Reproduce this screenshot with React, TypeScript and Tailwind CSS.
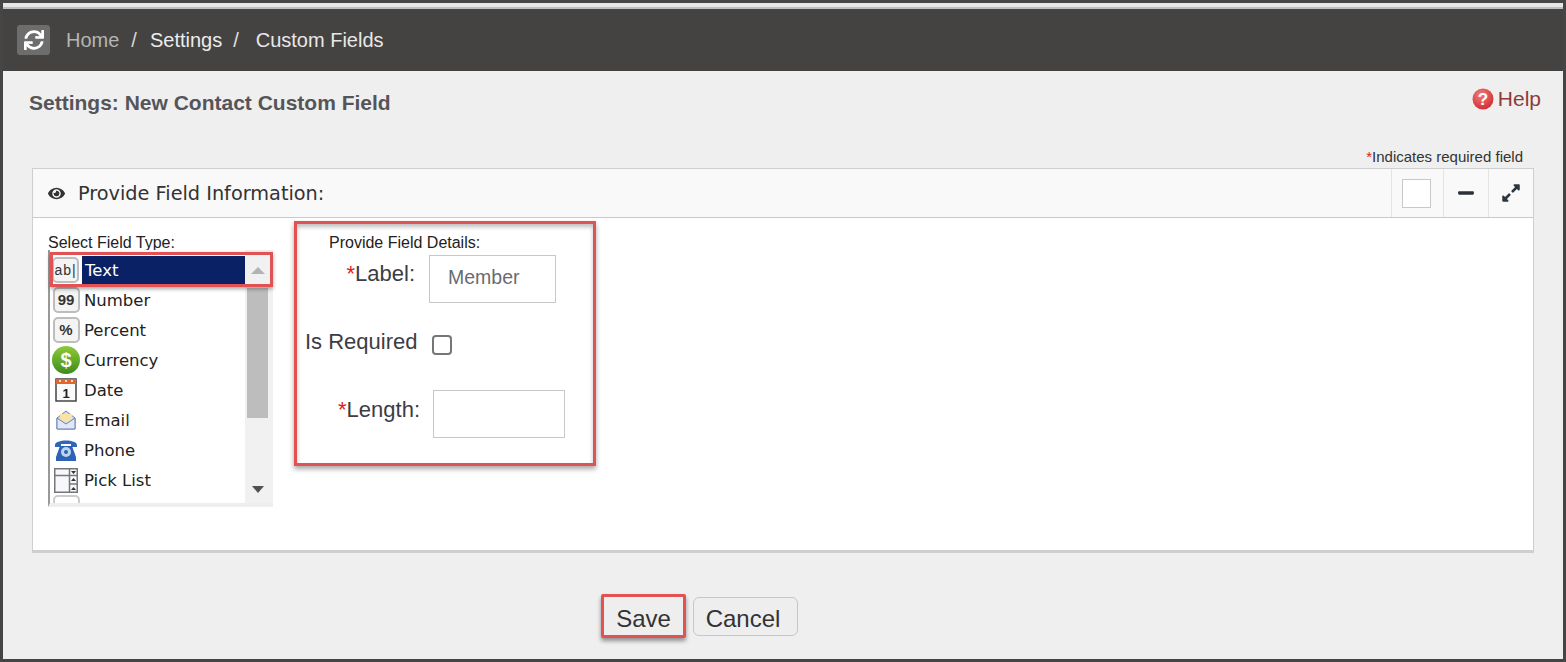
import { FaSync, FaEye, FaExpandAlt, FaMinus } from "react-icons/fa";

const sans = "font-['Liberation_Sans',Arial,sans-serif]";

function KeyIcon({ children, bold }: { children: string; bold?: boolean }) {
  return (
    <span
      className={`flex h-[26px] w-[27px] items-center justify-center rounded-[5px] border-2 border-[#bdbdbd] bg-[#f4f4f4] text-[#333] ${sans} ${
        bold ? "text-[15px] font-bold" : "text-[14px] tracking-[1px]"
      }`}
    >
      {children}
    </span>
  );
}

function Currency() {
  return (
    <svg width="28" height="28" viewBox="0 0 28 28">
      <defs>
        <linearGradient id="cur" x1="0" y1="0" x2="0" y2="1">
          <stop offset="0" stopColor="#8fc93a" />
          <stop offset="1" stopColor="#3c8c1c" />
        </linearGradient>
      </defs>
      <circle cx="14" cy="14" r="14" fill="url(#cur)" />
      <text x="14" y="21" textAnchor="middle" fontSize="20" fontWeight="700" fill="#fff" fontFamily="Liberation Sans">
        $
      </text>
    </svg>
  );
}

function DateIcon() {
  return (
    <svg width="22" height="24" viewBox="0 0 22 24">
      <rect x="1" y="1" width="20" height="22" fill="#fafafa" stroke="#444" strokeWidth="1.5" />
      <rect x="1" y="1" width="20" height="5" fill="#e0662c" />
      <path d="M4 3 H6 M10 3 H12 M16 3 H18" stroke="#fff" strokeWidth="1.5" />
      <text x="11" y="20" textAnchor="middle" fontSize="13" fontWeight="700" fill="#222" fontFamily="Liberation Sans">
        1
      </text>
    </svg>
  );
}

function EmailIcon() {
  return (
    <svg width="20" height="20" viewBox="0 0 20 20">
      <path d="M1 8 L10 1 L19 8 V19 H1 Z" fill="#cfdcf2" stroke="#6d83ad" />
      <rect x="4" y="4" width="12" height="8" fill="#f7e3a5" />
      <path d="M1 8 L10 14 L19 8 V19 H1 Z" fill="#dfe8f8" stroke="#6d83ad" />
    </svg>
  );
}

function PhoneIcon() {
  return (
    <svg width="24" height="24" viewBox="0 0 24 24">
      <path d="M1 7 C1 1 23 1 23 7 V9 H17 V6 H7 V9 H1 Z" fill="#2f66b8" />
      <path d="M6 8 H18 L22 19 V23 H2 V19 Z" fill="#2d62b5" />
      <circle cx="12" cy="14" r="5" fill="#bcd3f2" />
      <circle cx="12" cy="14" r="2" fill="#2d62b5" />
    </svg>
  );
}

function PickListIcon() {
  return (
    <svg width="24" height="25" viewBox="0 0 24 25">
      <rect x="0.75" y="0.75" width="22.5" height="23.5" fill="#f6f8fb" stroke="#777" strokeWidth="1.5" />
      <path d="M0.75 7.5 H23.25 M15.5 0.75 V24.25 M15.5 16 H23.25" stroke="#777" strokeWidth="1.5" fill="none" />
      <path d="M17 3 H22 L19.5 6 Z M17 13 L19.5 10 L22 13 Z M17 22 L19.5 19 L22 22 Z" fill="#333" />
    </svg>
  );
}

const rows = [
  { label: "Number", icon: <KeyIcon bold>99</KeyIcon> },
  { label: "Percent", icon: <KeyIcon bold>%</KeyIcon> },
  { label: "Currency", icon: <Currency /> },
  { label: "Date", icon: <DateIcon /> },
  { label: "Email", icon: <EmailIcon /> },
  { label: "Phone", icon: <PhoneIcon /> },
  { label: "Pick List", icon: <PickListIcon /> },
];

function FieldList() {
  return (
    <div className="relative -mt-px flex h-[257px] w-[225px] border-b-4 border-l-2 border-b-[#eee] border-l-[#999] bg-white font-['DejaVu_Sans',sans-serif] text-[16.5px] text-[#222]">
      <div className="h-full w-[195px] overflow-hidden pt-[5px]">
        <div className="flex h-[30px] items-center">
          <span className="flex h-[30px] w-[31px] shrink-0 items-center justify-center">
            <KeyIcon>ab|</KeyIcon>
          </span>
          <span className="ml-px flex h-[28px] flex-1 items-center bg-[#0a2265] pl-[3px] pt-[2px] text-white">Text</span>
        </div>
        {rows.map((r) => (
          <div key={r.label} className="flex h-[30px] items-center">
            <span className="flex h-[30px] w-[32px] shrink-0 items-center justify-center">{r.icon}</span>
            <span className="pl-[2px] pt-[3px]">{r.label}</span>
          </div>
        ))}
        <div className="ml-[3px] h-[26px] w-[27px] rounded-[5px] border-2 border-[#ccc]" />
      </div>
      {/* scrollbar */}
      <div className="flex h-full w-[28px] flex-col bg-[#f1f1f1] pl-[2px] pr-[5px]">
        <div className="flex h-[38px] shrink-0 items-center justify-center pt-[2px]">
          <span className="h-0 w-0 border-x-[7px] border-b-[7px] border-x-transparent border-b-[#b3b3b3]" />
        </div>
        <div className="h-[130px] shrink-0 bg-[#bdbdbd]" />
        <div className="flex flex-1 items-end justify-center pb-[10px]">
          <span className="h-0 w-0 border-x-[6px] border-t-[7px] border-x-transparent border-t-[#505050]" />
        </div>
      </div>
    </div>
  );
}

function FieldDetails() {
  return (
    <div className={`flex h-[245px] w-[302px] flex-col border-[3px] border-[#e25252] shadow-[0_3px_5px_rgba(0,0,0,0.35),inset_0_3px_4px_rgba(0,0,0,0.25)] ${sans}`}>
      <p className="ml-[32px] mt-[11px] text-[16px] leading-4 text-[#222]">Provide Field Details:</p>
      <div className="mt-[4px] flex">
        <label className="mt-[7px] w-[118px] text-right text-[22px] leading-6 text-[#3c3c44]">
          <span className="text-[#e01c1c]">*</span>Label:
        </label>
        <div className="ml-[14px] flex h-[48px] w-[127px] items-center border border-[#c8c8c8] pb-[2px] pl-[18px] text-[19.5px] text-[#666c72]">
          Member
        </div>
      </div>
      <div className="mt-[27px] flex">
        <label className="ml-[8px] w-[112px] whitespace-nowrap text-[22px] leading-6 text-[#3c3c44]">Is Required</label>
        <span className="ml-[15px] mt-[5px] h-5 w-5 rounded-[4px] border-2 border-[#767676] bg-white" />
      </div>
      <div className="mt-[35px] flex">
        <label className="mt-[8px] w-[123px] text-right text-[22px] leading-6 text-[#3c3c44]">
          <span className="text-[#e01c1c]">*</span>Length:
        </label>
        <div className="ml-[13px] h-[48px] w-[132px] border border-[#c8c8c8]" />
      </div>
    </div>
  );
}

function HelpIcon() {
  return (
    <svg width="22" height="22" viewBox="0 0 22 22">
      <defs>
        <radialGradient id="hlp" cx="0.4" cy="0.3" r="0.8">
          <stop offset="0" stopColor="#f47a7a" />
          <stop offset="1" stopColor="#c9282c" />
        </radialGradient>
      </defs>
      <circle cx="11" cy="11" r="10.5" fill="url(#hlp)" />
      <text x="11" y="17" textAnchor="middle" fontSize="17" fontWeight="700" fill="#fff" fontFamily="Liberation Sans">
        ?
      </text>
    </svg>
  );
}

export default function App() {
  return (
    <div className={`flex h-[662px] w-[1566px] flex-col overflow-hidden border-x-[3px] border-y-[3px] border-[#454545] bg-[#efefef] ${sans}`}>
      <div className="h-[6px] shrink-0 border-b-2 border-b-[#bdbdbd] bg-[#e6e6e6]" />

      {/* Breadcrumb bar */}
      <div className="flex h-[62px] shrink-0 items-center bg-[#454341] pl-[14px] text-[20px]">
        <span className="flex h-[30px] w-[33px] items-center justify-center rounded-[3px] bg-[#6d6d6d] text-white">
          <FaSync size={20} />
        </span>
        <span className="ml-4 text-[#b5b5b2]">Home</span>
        <span className="ml-3 text-[#d8d8d8]">/</span>
        <span className="ml-[13px] text-[#ececec]">Settings</span>
        <span className="ml-[11px] text-[#e0e0e0]">/</span>
        <span className="ml-[17px] text-[#e8e8e8]">Custom Fields</span>
      </div>

      {/* Page title */}
      <div className="flex h-[60px] shrink-0 items-start justify-between pl-[26px] pr-[22px] pt-[20px]">
        <h1 className="text-[21px] font-bold leading-6 text-[#555559]">Settings: New Contact Custom Field</h1>
        <a className="-mt-[4px] flex items-center gap-1 text-[21px] leading-6 text-[#8f3b37]">
          <HelpIcon />
          Help
        </a>
      </div>

      <p className="h-[24px] shrink-0 pr-[40px] pt-[18px] text-right text-[15px] leading-4 text-[#333]">
        <span className="text-[#e01c1c]">*</span>Indicates required field
      </p>

      <div className="shrink-0 pt-[14px]" />

      {/* Panel */}
      <section className="relative mx-[29px] -mt-[1px] flex h-[385px] w-[1502px] shrink-0 flex-col border border-b-[3px] border-[#cfcfcf] bg-white">
        <header className="flex h-[49px] shrink-0 items-center border-b border-[#c9c9c9] bg-[#f9f9f9]">
          <span className="ml-[15px] text-[#333]">
            <FaEye size={17} />
          </span>
          <h2 className="ml-[13px] flex-1 pt-[2px] font-['DejaVu_Sans',sans-serif] text-[19.3px] text-[#333]">
            Provide Field Information:
          </h2>
          <div className="flex h-full w-[52px] items-center justify-center border-l border-[#e4e4e4] pr-[2px]">
            <span className="h-[29px] w-[29px] border border-[#c8c8c8] bg-white" />
          </div>
          <div className="flex h-full w-[45px] items-center justify-center border-l border-[#e4e4e4] text-[#2b2f36]">
            <FaMinus size={18} />
          </div>
          <div className="flex h-full w-[45px] items-center justify-center border-l border-[#e4e4e4] text-[#2b3640]">
            <FaExpandAlt size={20} />
          </div>
        </header>

        <div className="flex items-start">
          <div className="ml-[15px] mt-[17px]">
            <p className="text-[16px] leading-4 text-[#222]">Select Field Type:</p>
            <FieldList />
          </div>
          <div className="ml-[21px] mt-[3px]">
            <FieldDetails />
          </div>
        </div>

        {/* annotation round the selected row */}
        <div className="absolute left-[17px] top-[83px] h-[35px] w-[223px] border-[3px] border-[#e25252] shadow-[0_2px_4px_rgba(0,0,0,0.35)]" />
      </section>

      {/* Actions */}
      <div className="ml-[598px] mt-[41px] flex items-center gap-[7px] text-[24px] text-[#333]">
        <button className="h-[44px] w-[85px] rounded-[2px] border-[3px] border-[#e25252] bg-[#eee] pt-[5px] leading-none shadow-[0_3px_4px_rgba(0,0,0,0.4)]">
          Save
        </button>
        <button className="h-[39px] w-[105px] rounded-[6px] border border-[#c6c6c6] bg-[#eeeeee] pr-[5px] pt-[5px] leading-none">
          Cancel
        </button>
      </div>
    </div>
  );
}
